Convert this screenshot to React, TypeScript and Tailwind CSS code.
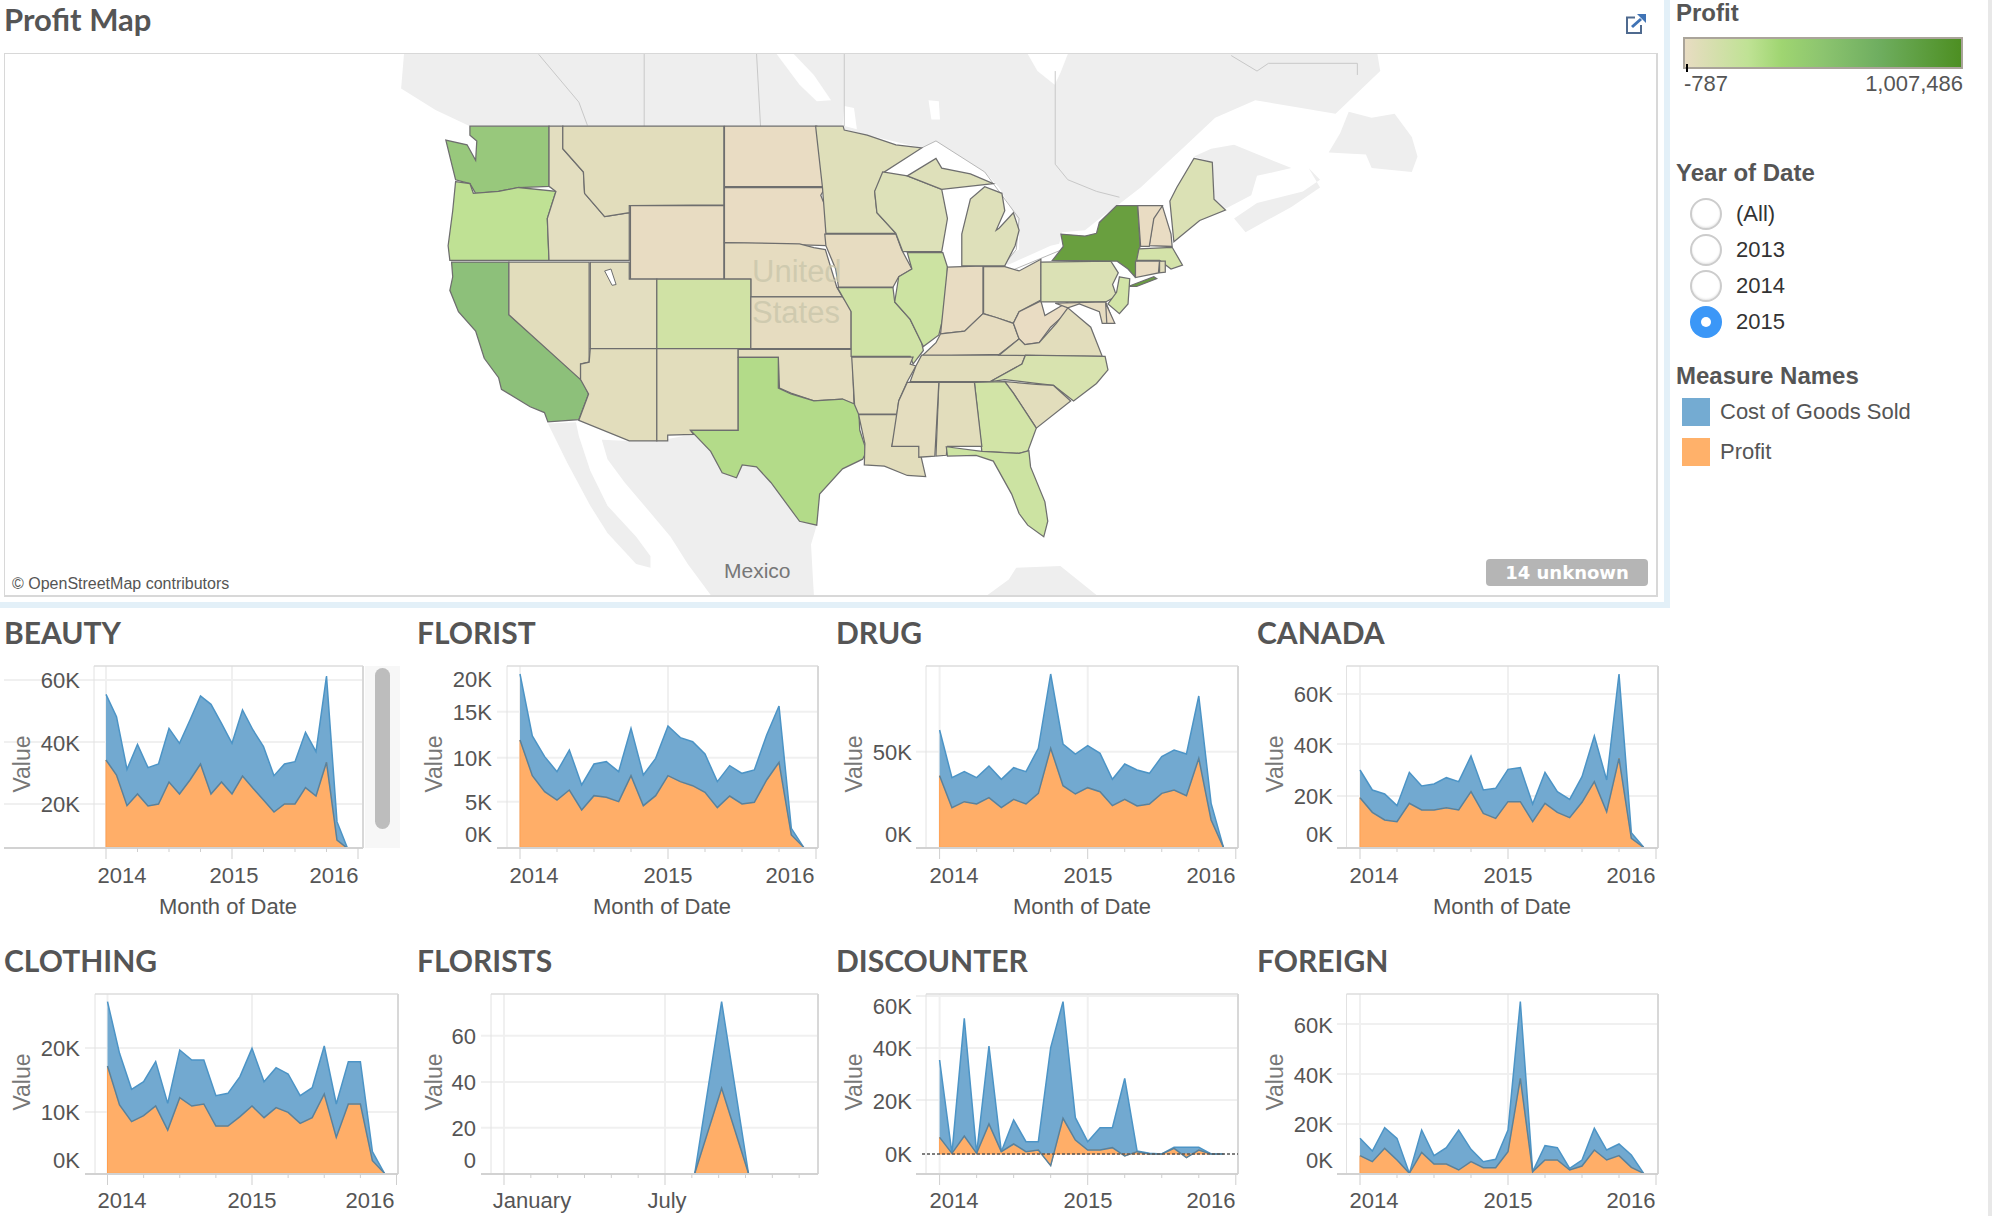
const ink = "#555555";

type State = [string, string];

// map shapes are traced in crop units: x * 0.574, y * 0.39 gives page pixels
const westStates: State[] = [
  ["#98c87c", "820,322 958,322 958,477 905,480 870,490 830,495 820,470 795,460 790,430 778,358 815,370 830,410 832,360 820,345"],
  ["#bfe194", "795,465 820,470 826,495 870,490 905,480 970,490 955,560 958,668 785,668 782,630 790,540"],
  ["#8dc07a", "788,672 888,672 888,808 1015,975 1027,1012 1010,1078 956,1084 950,1060 925,1045 875,1000 870,970 845,920 830,850 800,800 785,745 790,710"],
  ["#e2ddbc", "888,672 1028,672 1028,930 1013,935 1013,975 888,808"],
  ["#e3dec0", "958,322 982,322 982,380 1018,440 1020,495 1055,555 1098,545 1098,668 958,668 955,560 970,490 958,477"],
  ["#e2ddbc", "982,322 1263,322 1263,525 1098,527 1098,545 1055,555 1020,495 1018,440 982,380"],
  ["#e8dcc2", "1100,527 1263,527 1263,716 1100,716"],
  ["#e9dcc3", "1264,322 1425,322 1440,478 1264,478"],
  ["#e9dcc3", "1264,480 1440,480 1432,500 1443,540 1442,630 1400,628 1264,622"],
  ["#e6dcc0", "1264,622 1395,625 1420,635 1440,640 1460,737 1470,762 1310,762 1310,716 1264,716"],
  ["#e3dec0", "1030,672 1098,672 1098,716 1146,716 1146,895 1030,895"],
  ["#d0e2a5", "1146,716 1310,716 1310,895 1146,895"],
  ["#e2ddbc", "1030,895 1146,895 1146,1133 1098,1133 1010,1080 1027,1012 1013,975 1013,935 1028,930"],
  ["#e2ddbc", "1146,895 1288,895 1288,1106 1205,1106 1210,1116 1165,1118 1165,1133 1146,1133"],
  ["#e6dcc0", "1310,762 1470,762 1485,790 1485,895 1310,895"],
  ["#e4ddbf", "1288,897 1487,897 1490,1040 1470,1025 1420,1030 1380,1010 1360,997 1358,918 1288,918"],
  ["#b3db89", "1288,918 1358,918 1358,997 1380,1012 1420,1030 1470,1025 1498,1042 1500,1105 1512,1160 1505,1180 1470,1205 1430,1270 1425,1350 1395,1340 1370,1290 1345,1240 1320,1200 1295,1195 1285,1228 1260,1215 1240,1160 1205,1106 1288,1106"],
];

const eastStates: State[] = [
  ["#dfdfba", "30,322 78,322 80,332 120,345 170,370 215,378 150,440 147,465 133,490 137,545 170,598 48,598 42,480"],
  ["#e7dcc1", "46,600 170,600 180,640 198,690 175,710 165,737 70,737 65,690 48,630"],
  ["#d0e3a6", "68,738 165,738 168,775 195,820 215,880 218,900 200,935 195,915 92,915 92,800"],
  ["#e2ddbc", "93,917 200,917 195,935 205,940 190,980 175,1030 172,1064 105,1064 98,1040"],
  ["#e2ddbc", "105,1065 175,1065 163,1147 210,1147 215,1180 222,1225 190,1222 150,1198 115,1195 116,1140"],
  ["#dde1b9", "147,440 190,450 250,485 260,560 250,645 182,645 170,598 137,545 133,490"],
  ["#cce3a2", "190,648 252,648 260,685 258,780 245,860 218,890 195,820 168,775 175,710 198,690"],
  ["#e8dcc2", "260,685 322,682 322,805 290,850 248,857"],
  ["#dee0ba", "285,682 360,682 378,630 385,590 375,545 350,585 345,590 360,540 355,495 325,478 300,510 285,600"],
  ["#dee0ba", "190,450 240,405 250,430 300,445 340,470 250,485"],
  ["#e4ddbf", "323,684 360,684 385,695 423,665 423,770 385,800 375,830 345,815 323,805"],
  ["#e6dcc0", "248,857 290,850 322,805 345,815 375,830 385,870 350,910 215,915 240,880"],
  ["#e2ddbc", "215,912 396,912 390,935 335,980 195,980 205,940"],
  ["#e9dcc3", "375,830 385,800 423,772 430,810 470,775 470,800 440,840 420,880 395,885 385,870"],
  ["#e2ddbc", "350,912 385,870 395,885 420,880 450,830 470,790 510,840 530,915"],
  ["#dbe1b5", "423,672 545,670 558,700 548,730 555,760 536,775 423,775"],
  ["#699f3f", "555,527 592,527 596,630 587,710 575,690 556,670 443,668 462,632 458,600 500,605 520,598 525,570"],
  ["#699f3f", "575,735 620,710 625,715 590,735"],
  ["#d2e4a7", "560,710 578,715 575,780 560,805 540,780 555,750"],
  ["#e6dcc0", "448,778 536,775 550,830 530,830 525,800 490,780 470,790"],
  ["#e9dcc3", "536,778 552,830 538,830"],
  ["#d8e3af", "396,912 535,915 540,950 520,985 480,1030 445,990 415,985 360,975 335,980 390,935"],
  ["#e2ddbc", "360,980 415,987 445,990 475,1030 415,1100 375,1010"],
  ["#d2e4a7", "307,982 360,980 375,1010 415,1100 400,1160 385,1165 320,1160"],
  ["#e2ddbc", "245,982 307,982 320,1147 260,1147 258,1170 240,1172"],
  ["#e4ddbf", "190,982 245,982 238,1172 210,1175 210,1147 163,1147 175,1030"],
  ["#cce3a2", "258,1148 320,1160 385,1165 402,1158 405,1200 430,1290 435,1340 428,1380 400,1350 385,1320 372,1270 340,1185 310,1170 260,1172"],
  ["#dbe1b5", "690,405 722,415 725,510 745,538 700,565 655,620 648,515 660,480"],
  ["#e9dcc3", "612,630 620,550 635,528 650,600 652,632"],
  ["#e9dcc3", "592,527 635,527 620,560 612,632 597,632"],
  ["#d4e3a9", "594,638 652,634 670,680 650,690 630,668 590,668"],
  ["#e9dcc3", "588,670 630,670 628,700 588,712"],
  ["#e2ddbc", "630,670 640,670 640,698 630,700"],
];

function ProfitMap() {
  return (
    <svg viewBox="9 136 2880 1394" preserveAspectRatio="none" className="block h-full w-full">
      <g fill="#eeeeee">
        <polygon points="705,136 2403,136 2408,180 2330,290 2190,255 2120,300 2070,370 1990,480 1955,520 1923,555 1893,590 1853,595 1848,625 1833,630 1758,680 1750,660 1778,640 1778,570 1743,480 1718,440 1633,360 1608,378 1513,345 1473,330 1471,300 1473,322 820,322 760,280 700,225" />
        <polygon points="2083,400 2113,380 2153,370 2253,430 2193,450 2183,500 2138,535 2118,510 2115,415" />
        <polygon points="2153,560 2193,520 2273,490 2303,460 2283,430 2303,480 2253,530 2173,595" />
        <polygon points="2318,390 2338,340 2353,285 2393,300 2433,290 2463,350 2473,400 2463,440 2393,430 2383,395" />
        <polygon points="956,1088 1005,1085 1010,1120 1030,1210 1060,1300 1110,1380 1135,1430 1135,1460 1110,1450 1060,1370 1030,1300 990,1190" />
        <polygon points="1050,1130 1098,1133 1146,1133 1210,1116 1240,1160 1260,1215 1285,1228 1295,1195 1320,1200 1345,1240 1370,1290 1395,1340 1425,1350 1415,1400 1420,1530 1240,1530 1200,1450 1170,1380 1130,1310 1090,1240 1060,1180" />
        <polygon points="1723,1530 1760,1490 1773,1460 1850,1455 1913,1530" />
      </g>
      <g fill="#ffffff">
        <polygon points="1355,136 1385,136 1420,190 1450,255 1425,258 1395,215" />
        <polygon points="1793,136 1863,136 1850,185 1840,215 1810,180" />
        <polygon points="1620,255 1638,258 1640,305 1625,305" />
        <polygon points="2193,270 2253,300 2243,320 2200,295" />
        <polygon points="1473,270 1490,275 1495,330 1470,320" />
      </g>
      <g fill="none" stroke="#c8c8c8" strokeWidth="1">
        <path d="M1124 136V322M1320 136L1327 322M1473 136V322M940 137L1010 260L1025 320M1841 180V420L1863 460L1913 490L1953 505M2148 140L2193 180L2213 160H2368V190" vectorEffect="non-scaling-stroke" />
        <path d="M1608 378L1633 360L1718 440L1733 470L1778 560L1773 640L1751 680L1763 695L1853 640" vectorEffect="non-scaling-stroke" stroke="#b8b8b8" />
      </g>
      <g stroke="#6e6e6e" strokeWidth="1.25">
        {westStates.map(([fill, points], i) => (
          <polygon key={i} points={points} fill={fill} vectorEffect="non-scaling-stroke" />
        ))}
        <g transform="translate(1393 0)">
          {eastStates.map(([fill, points], i) => (
            <polygon key={i} points={points} fill={fill} vectorEffect="non-scaling-stroke" />
          ))}
        </g>
      </g>
      <polygon points="1055,695 1066,690 1075,730 1068,732" fill="#ffffff" stroke="#6e6e6e" strokeWidth="1" vectorEffect="non-scaling-stroke" />
    </svg>
  );
}

type ChartProps = {
  title: string;
  cellX: number;
  cellW: number;
  row: 1 | 2;
  gridA: number;
  gridB: number;
  frameL: number;
  frameR: number;
  axisL: number;
  labelR: number;
  valueX: number;
  yTicks: [string, number | null, number][];
  xLabels: [string, number][];
  blue: number[];
  orange: number[];
  base: number;
  months?: number;
  tickEvery?: number;
  start?: number;
  zero?: number;
  monthX?: number;
};

function AreaChart(c: ChartProps) {
  const origin = c.row === 1 ? 600 : 920;
  const top = c.row === 1 ? 664 : 992;
  const height = c.row === 1 ? 256 : 224;
  const frameTop = c.row === 1 ? 666 : 994;
  const frameBottom = c.row === 1 ? 848 : 1174;
  const valueY = c.row === 1 ? 764 : 1082;
  const labelY = c.row === 1 ? 875 : 1200;
  const period = c.months ?? 12;
  const every = c.tickEvery ?? 3;
  const step = (c.gridB - c.gridA) / period;
  const y = (z: number) => origin + z / 3;
  const x = (i: number) => c.gridA + (i + (c.start ?? 0)) * step;
  const line = (data: number[]) => data.map((z, i) => `${x(i)},${y(z)}`).join(" ");
  const baseY = y(c.base);
  const orangeArea = `${x(0)},${baseY} ${line(c.orange)} ${x(c.orange.length - 1)},${baseY}`;
  const blueArea = `${line(c.blue)} ${c.orange
    .map((z, i) => `${x(i)},${y(z)}`)
    .reverse()
    .join(" ")}`;
  const ticks: number[] = [];
  for (let i = 0; c.gridA + i * step <= c.frameR; i += every) ticks.push(i);

  return (
    <div>
      <h2
        className={`font-['Lato',sans-serif] text-[30px] leading-[36px] font-bold text-[#555555] pl-[4px] ${
          c.row === 1 ? "pt-[6px] h-[56px]" : "pt-[22px] h-[72px]"
        }`}
      >
        {c.title}
      </h2>
      <svg width={c.cellW} height={height} viewBox={`${c.cellX} ${top} ${c.cellW} ${height}`} className="block">
        <g stroke="#f0f0f0" strokeWidth="2">
          {c.yTicks.map(([label, grid]) =>
            grid === null ? null : <line key={label} x1={c.axisL} x2={c.frameR} y1={y(grid)} y2={y(grid)} />
          )}
          <line x1={c.gridA} x2={c.gridA} y1={frameTop} y2={frameBottom} />
          <line x1={c.gridB} x2={c.gridB} y1={frameTop} y2={frameBottom} />
        </g>
        <line x1={c.frameL} x2={c.frameL} y1={frameTop} y2={frameBottom} stroke="#e2e2e2" />
        <line x1={c.frameL} x2={c.frameR} y1={frameTop} y2={frameTop} stroke="#dddddd" strokeWidth="1.5" />
        <line x1={c.frameR} x2={c.frameR} y1={frameTop} y2={frameBottom} stroke="#d8d8d8" strokeWidth="2" />
        <polygon points={blueArea} fill="#72a9d0" />
        <polygon points={orangeArea} fill="#ffae68" stroke="#ff9f50" strokeWidth="1" />
        <polyline points={line(c.blue)} fill="none" stroke="#4c94c6" strokeWidth="1.5" />
        <polyline points={line(c.orange)} fill="none" stroke="#56829f" strokeWidth="1.5" />
        {c.zero !== undefined && (
          <line x1={c.axisL + 6} x2={c.frameR} y1={y(c.zero)} y2={y(c.zero)} stroke="#555555" strokeWidth="1.5" strokeDasharray="3 2" />
        )}
        <line x1={c.axisL} x2={c.frameR} y1={frameBottom} y2={frameBottom} stroke="#d2d2d2" strokeWidth="2" />
        {ticks.map((i) => (
          <line
            key={i}
            x1={c.gridA + i * step}
            x2={c.gridA + i * step}
            y1={frameBottom}
            y2={frameBottom + (i % period === 0 ? 11 : 4)}
            stroke="#cfcfcf"
          />
        ))}
        <g className="text-[22px]" fill={ink} dominantBaseline="central">
          {c.yTicks.map(([label, , labelZ]) => (
            <text key={label} x={c.labelR} y={y(labelZ)} textAnchor="end">
              {label}
            </text>
          ))}
          {c.xLabels.map(([label, cx]) => (
            <text key={label} x={cx} y={labelY} textAnchor="middle">
              {label}
            </text>
          ))}
          {c.monthX !== undefined && (
            <text x={c.monthX} y={906} textAnchor="middle">
              Month of Date
            </text>
          )}
        </g>
        <text
          x={c.valueX}
          y={valueY}
          transform={`rotate(-90 ${c.valueX} ${valueY})`}
          textAnchor="middle"
          dominantBaseline="central"
          fill="#777777"
          className="text-[23px]"
        >
          Value
        </text>
      </svg>
    </div>
  );
}

const charts: ChartProps[] = [
  {
    title: "BEAUTY", cellX: 0, cellW: 413, row: 1, gridA: 106, gridB: 232, frameL: 94, frameR: 363, axisL: 4, labelR: 80, valueX: 22,
    yTicks: [["60K", 240, 240], ["40K", 426, 430], ["20K", 612, 612]],
    xLabels: [["2014", 122], ["2015", 234], ["2016", 334]], monthX: 228, base: 742,
    blue: [283, 350, 508, 433, 503, 492, 385, 430, 360, 288, 313, 370, 430, 330, 390, 440, 527, 492, 485, 397, 455, 228, 665, 745],
    orange: [480, 525, 617, 582, 618, 612, 546, 582, 540, 492, 582, 546, 582, 528, 565, 600, 636, 612, 612, 563, 588, 487, 720, 745],
  },
  {
    title: "FLORIST", cellX: 413, cellW: 419, row: 1, gridA: 520, gridB: 668, frameL: 507, frameR: 818, axisL: 497, labelR: 492, valueX: 434,
    yTicks: [["20K", null, 237], ["15K", 335, 337], ["10K", 473, 475], ["5K", 605, 607], ["0K", null, 703]],
    xLabels: [["2014", 534], ["2015", 668], ["2016", 790]], monthX: 662, base: 742,
    blue: [222, 408, 470, 515, 450, 555, 492, 485, 515, 385, 525, 475, 378, 413, 425, 462, 545, 497, 520, 510, 405, 318, 685, 742],
    orange: [420, 527, 575, 600, 570, 630, 587, 592, 605, 527, 617, 587, 527, 545, 557, 577, 623, 588, 612, 607, 540, 487, 705, 742],
  },
  {
    title: "DRUG", cellX: 832, cellW: 421, row: 1, gridA: 939.6, gridB: 1087.7, frameL: 926, frameR: 1238, axisL: 916, labelR: 912, valueX: 854,
    yTicks: [["50K", 455, 457], ["0K", null, 703]],
    xLabels: [["2014", 954], ["2015", 1088], ["2016", 1211]], monthX: 1082, base: 742,
    blue: [390, 533, 515, 533, 498, 538, 503, 515, 445, 222, 432, 462, 437, 460, 538, 492, 510, 520, 470, 450, 462, 288, 610, 742],
    orange: [527, 623, 605, 612, 593, 623, 598, 612, 580, 445, 557, 582, 563, 575, 617, 598, 618, 612, 580, 570, 587, 475, 660, 742],
  },
  {
    title: "CANADA", cellX: 1253, cellW: 417, row: 1, gridA: 1360, gridB: 1508, frameL: 1346.5, frameR: 1658, axisL: 1337, labelR: 1333, valueX: 1275,
    yTicks: [["60K", 282, 283], ["40K", 432, 435], ["20K", 588, 590], ["0K", null, 703]],
    xLabels: [["2014", 1374], ["2015", 1508], ["2016", 1631]], monthX: 1502, base: 742,
    blue: [510, 570, 582, 617, 517, 558, 552, 533, 545, 468, 570, 565, 508, 503, 612, 517, 575, 598, 530, 408, 540, 222, 698, 742],
    orange: [593, 637, 660, 665, 610, 630, 630, 623, 630, 575, 640, 655, 605, 605, 665, 610, 637, 653, 607, 545, 635, 475, 715, 742],
  },
  {
    title: "CLOTHING", cellX: 0, cellW: 413, row: 2, gridA: 107.5, gridB: 252, frameL: 95, frameR: 398, axisL: 85, labelR: 80, valueX: 22,
    yTicks: [["20K", 384, 385], ["10K", 576, 577], ["0K", null, 722]],
    xLabels: [["2014", 122], ["2015", 252], ["2016", 370]], base: 760,
    blue: [245, 400, 508, 485, 425, 550, 390, 420, 420, 527, 520, 470, 385, 485, 443, 462, 527, 503, 378, 552, 425, 425, 695, 760],
    orange: [438, 555, 605, 587, 558, 630, 533, 558, 552, 618, 618, 590, 558, 593, 563, 577, 610, 593, 522, 652, 552, 552, 722, 760],
  },
  {
    title: "FLORISTS", cellX: 413, cellW: 419, row: 2, gridA: 504, gridB: 665, frameL: 491, frameR: 818, axisL: 481, labelR: 476, valueX: 434,
    yTicks: [["60", 347, 349], ["40", 486, 488], ["20", 623, 625], ["0", null, 722]],
    xLabels: [["January", 532], ["July", 667]], base: 760, months: 6, tickEvery: 1, start: 7.11,
    blue: [760, 245, 760],
    orange: [760, 505, 760],
  },
  {
    title: "DISCOUNTER", cellX: 832, cellW: 421, row: 2, gridA: 939.6, gridB: 1087.7, frameL: 926, frameR: 1238, axisL: 916, labelR: 912, valueX: 854,
    yTicks: [["60K", 228, 260], ["40K", 384, 385], ["20K", 540, 543], ["0K", null, 703]],
    xLabels: [["2014", 954], ["2015", 1088], ["2016", 1211]], base: 702, zero: 702,
    blue: [420, 700, 295, 700, 378, 695, 600, 665, 665, 383, 245, 593, 665, 623, 623, 475, 693, 700, 702, 682, 682, 682, 702, 702],
    orange: [652, 700, 648, 700, 612, 695, 672, 695, 690, 737, 595, 660, 690, 690, 683, 708, 695, 702, 702, 685, 713, 690, 702, 702],
  },
  {
    title: "FOREIGN", cellX: 1253, cellW: 417, row: 2, gridA: 1360, gridB: 1508, frameL: 1346.5, frameR: 1658, axisL: 1337, labelR: 1333, valueX: 1275,
    yTicks: [["60K", 312, 315], ["40K", 462, 465], ["20K", 612, 613], ["0K", null, 722]],
    xLabels: [["2014", 1374], ["2015", 1508], ["2016", 1631]], base: 760,
    blue: [655, 693, 623, 655, 760, 630, 707, 683, 630, 688, 725, 718, 630, 245, 755, 677, 683, 745, 720, 625, 690, 672, 705, 760],
    orange: [707, 725, 685, 720, 760, 697, 732, 732, 750, 725, 743, 743, 695, 475, 755, 720, 720, 750, 738, 690, 720, 707, 742, 760],
  },
];

function Radio({ label, checked }: { label: string; checked?: boolean }) {
  return (
    <div className="flex h-[36px] items-center pl-[14px]">
      {checked ? (
        <span className="flex h-[32px] w-[32px] items-center justify-center rounded-full bg-[#3b97f7]">
          <span className="h-[10px] w-[10px] rounded-full bg-white" />
        </span>
      ) : (
        <span className="h-[32px] w-[32px] rounded-full border-2 border-[#cccccc] bg-white shadow-[inset_0_-1px_2px_rgba(0,0,0,0.1)]" />
      )}
      <span className="ml-[14px] text-[22px] leading-none text-[#333333]">{label}</span>
    </div>
  );
}

function Sidebar() {
  return (
    <aside className="w-[322px] border-r-4 border-[#e8e8e8] pl-[6px] text-[#555555]">
      <h3 className="h-[26px] text-[24px] leading-[26px] font-bold">Profit</h3>
      <div className="relative mt-[11px] ml-[7px] h-[32px] w-[280px] border-2 border-[#aaa49a] bg-[linear-gradient(90deg,#e8dcc2_0%,#bfe294_23%,#9fd571_35%,#8cc46f_50%,#6fae60_70%,#4d8f22_100%)]">
        <span className="absolute bottom-[-5px] left-[1px] h-[8px] w-[2px] bg-black" />
      </div>
      <div className="mt-[3px] ml-[8px] flex w-[279px] justify-between text-[22px] leading-[24px]">
        <span>-787</span>
        <span>1,007,486</span>
      </div>
      <h3 className="mt-[63px] h-[28px] text-[24px] leading-[28px] font-bold">Year of Date</h3>
      <div className="mt-[9px]">
        <Radio label="(All)" />
        <Radio label="2013" />
        <Radio label="2014" />
        <Radio label="2015" checked />
      </div>
      <h3 className="mt-[22px] h-[28px] text-[24px] leading-[28px] font-bold">Measure Names</h3>
      <div className="mt-[8px] flex items-center pl-[6px]">
        <span className="h-[28px] w-[28px] bg-[#74abd2]" />
        <span className="ml-[10px] text-[22px] leading-none">Cost of Goods Sold</span>
      </div>
      <div className="mt-[12px] flex items-center pl-[6px]">
        <span className="h-[28px] w-[28px] bg-[#ffb16a]" />
        <span className="ml-[10px] text-[22px] leading-none">Profit</span>
      </div>
    </aside>
  );
}

export default function App() {
  return (
    <div className="flex h-[1216px] w-[1992px] overflow-hidden bg-white font-['Liberation_Sans',sans-serif]">
      <main className="w-[1670px]">
        <section className="h-[608px] w-[1670px] border-r-[6px] border-b-[6px] border-[#e3f0f8]">
          <header className="flex h-[53px] items-start justify-between pr-[18px] pl-[4px]">
            <h1 className="font-['Lato',sans-serif] text-[31px] leading-[38px] font-bold text-[#555555]">Profit Map</h1>
            <svg viewBox="0 0 20 20" className="mt-[14px] h-[20px] w-[20px]">
              <path d="M9 3.5H1V19H15V11" fill="none" stroke="#4f6a8f" strokeWidth="2" />
              <path d="M6 13L15 5" stroke="#3f73b5" strokeWidth="3" />
              <polygon points="11,0 20,0 20,9" fill="#3f73b5" />
            </svg>
          </header>
          <div className="relative ml-[4px] h-[544px] w-[1654px] border-t border-r-2 border-b-2 border-l border-[#d8d8d8]">
            <ProfitMap />
            <span className="absolute top-[197px] left-[747px] text-[31px] leading-[41px] text-[#c9c6ab]/80">
              United
              <br />
              States
            </span>
            <span className="absolute top-[504px] left-[719px] text-[21px] leading-[26px] text-[#777777]">Mexico</span>
            <span className="absolute bottom-[1px] left-[7px] text-[16px] leading-[20px] text-[#555555]">© OpenStreetMap contributors</span>
            <span className="absolute top-[505px] left-[1481px] flex h-[27px] w-[162px] items-center justify-center rounded-[4px] bg-[#b5b5b5] font-['DejaVu_Sans',sans-serif] text-[18px] font-bold text-white">
              14 unknown
            </span>
          </div>
        </section>
        <div className="relative grid grid-cols-[413px_419px_421px_417px]">
          {charts.map((c) => (
            <AreaChart key={c.title} {...c} />
          ))}
          <div className="absolute top-[58px] left-[365px] h-[182px] w-[35px] bg-[#f7f7f7] py-[2px]">
            <div className="mx-[10px] h-[161px] rounded-full bg-[#bdbdbd]" />
          </div>
        </div>
      </main>
      <Sidebar />
    </div>
  );
}
